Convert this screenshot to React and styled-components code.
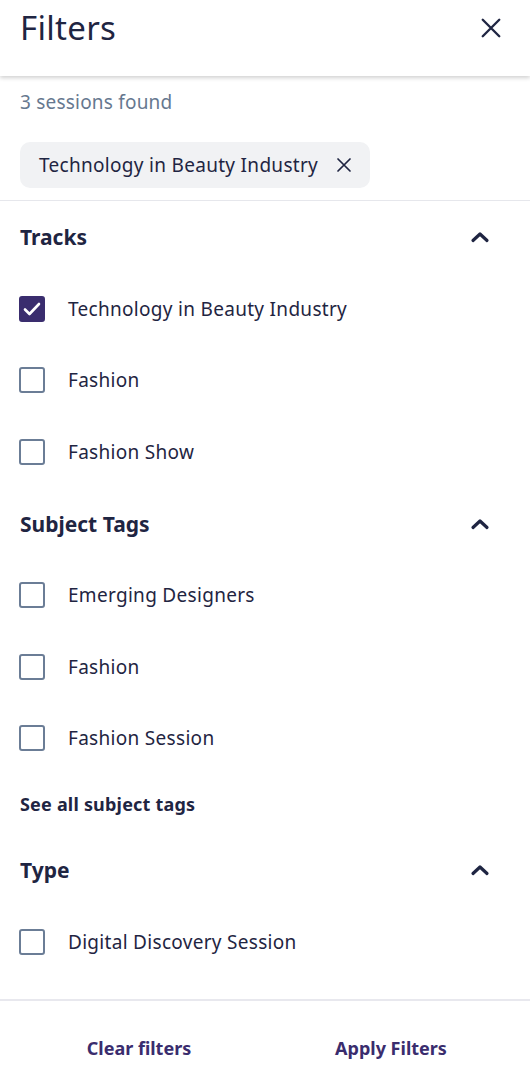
import React, { useState } from 'react';
import styled, { createGlobalStyle } from 'styled-components';

const GlobalStyle = createGlobalStyle`
  html, body {
    margin: 0;
    padding: 0;
    background: #fff;
  }
  body {
    font-family: "Noto Sans", Lato, sans-serif;
    color: #1f2542;
  }
  * { box-sizing: border-box; }
`;

const Panel = styled.div`
  width: 530px;
  height: 1086px;
  display: flex;
  flex-direction: column;
  background: #fff;
  overflow: hidden;
`;

const Header = styled.div`
  height: 76px;
  flex-shrink: 0;
  display: flex;
  align-items: flex-start;
  justify-content: space-between;
  padding: 0 20px;
  box-shadow: 0 2px 4px rgba(0, 0, 0, 0.18);
  position: relative;
  z-index: 1;
`;

const Title = styled.h1`
  margin: 0;
  font-size: 33px;
  font-weight: 400;
  letter-spacing: 0.3px;
  line-height: 56px;
  color: #1f2542;
`;

const IconButton = styled.button`
  width: 36px;
  height: 56px;
  padding: 0;
  border: none;
  background: none;
  display: flex;
  align-items: center;
  justify-content: center;
  color: #1f2542;
  cursor: pointer;
  margin-right: 1px;
`;

const Body = styled.div`
  flex: 1;
  display: flex;
  flex-direction: column;
`;

const Summary = styled.div`
  padding: 14px 20px 12px;
  border-bottom: 1px solid #e6e7ec;
`;

const Count = styled.p`
  margin: 0;
  font-size: 19px;
  letter-spacing: 0.2px;
  line-height: 24px;
  color: #66788f;
`;

const Chip = styled.div`
  display: inline-flex;
  align-items: center;
  gap: 18px;
  height: 46px;
  margin-top: 28px;
  padding: 0 18px 0 19px;
  background: #f1f2f4;
  border-radius: 10px;
  font-size: 19px;
  letter-spacing: 0.3px;
  color: #1f2542;
`;

const ChipClose = styled.button`
  border: none;
  background: none;
  padding: 0;
  display: flex;
  color: #1f2542;
  cursor: pointer;
`;

const Section = styled.section`
  padding: 0 20px;
`;

const SectionHead = styled.div`
  height: 72px;
  display: flex;
  align-items: center;
  justify-content: space-between;
`;

const SectionTitle = styled.h2`
  margin: 0;
  font-size: 21px;
  font-weight: 700;
  color: #1f2542;
`;

const Chevron = styled.span`
  display: flex;
  margin-right: 20px;
  color: #1f2542;
`;

const Option = styled.label`
  height: 71.5px;
  display: flex;
  align-items: center;
  gap: 23px;
  font-size: 19px;
  letter-spacing: 0.3px;
  color: #1f2542;
  cursor: pointer;
`;

const Box = styled.span`
  width: 26px;
  height: 26px;
  flex-shrink: 0;
  margin-left: -1px;
  border-radius: 3px;
  border: 2px solid ${(p) => (p.checked ? '#3a2d6e' : '#6b7d96')};
  background: ${(p) => (p.checked ? '#3a2d6e' : '#fff')};
  display: flex;
  align-items: center;
  justify-content: center;
`;

const SeeAll = styled.button`
  height: 60px;
  padding: 0;
  border: none;
  background: none;
  font-family: inherit;
  font-size: 18px;
  letter-spacing: 0.2px;
  font-weight: 700;
  color: #1f2542;
  text-align: left;
  cursor: pointer;
`;

const Footer = styled.div`
  margin-top: auto;
  height: 87px;
  border-top: 2px solid #e8e8ee;
  display: grid;
  grid-template-columns: 1fr 1fr;
  gap: 14px;
  padding: 0 20px;
  align-items: center;
`;

const FooterButton = styled.button`
  border: none;
  background: none;
  font-family: inherit;
  font-size: 18px;
  font-weight: 700;
  color: #3a2d6e;
  padding: 8px 0 0;
  cursor: pointer;
`;

const XIcon = ({ size, stroke }) => (
  <svg width={size} height={size} viewBox="0 0 24 24" fill="none" stroke="currentColor" strokeWidth={stroke} strokeLinecap="round">
    <path d="M3 3l18 18M21 3L3 21" />
  </svg>
);

const UpIcon = () => (
  <svg width="20" height="12" viewBox="0 0 20 12" fill="none" stroke="currentColor" strokeWidth="3.2" strokeLinecap="round" strokeLinejoin="round">
    <path d="M3 9.5L10 3l7 6.5" />
  </svg>
);

const Check = () => (
  <svg width="18" height="14" viewBox="0 0 18 14" fill="none" stroke="#fff" strokeWidth="2.6" strokeLinecap="round" strokeLinejoin="round">
    <path d="M2 7.5l4.5 4.5L16 2" />
  </svg>
);

const sections = [
  {
    title: 'Tracks',
    options: ['Technology in Beauty Industry', 'Fashion', 'Fashion Show'],
  },
  {
    title: 'Subject Tags',
    options: ['Emerging Designers', 'Fashion', 'Fashion Session'],
    more: 'See all subject tags',
  },
  {
    title: 'Type',
    options: ['Digital Discovery Session'],
  },
];

const App = () => {
  const [checked, setChecked] = useState({ 'Tracks-Technology in Beauty Industry': true });

  const toggle = (key) => setChecked((prev) => ({ ...prev, [key]: !prev[key] }));

  return (
    <Panel>
      <GlobalStyle />
      <Header>
        <Title>Filters</Title>
        <IconButton aria-label="Close">
          <XIcon size={22} stroke={2.6} />
        </IconButton>
      </Header>
      <Body>
        <Summary>
          <Count>3 sessions found</Count>
          <Chip>
            Technology in Beauty Industry
            <ChipClose aria-label="Remove">
              <XIcon size={16} stroke={2.6} />
            </ChipClose>
          </Chip>
        </Summary>
        {sections.map((s) => (
          <Section key={s.title}>
            <SectionHead>
              <SectionTitle>{s.title}</SectionTitle>
              <Chevron>
                <UpIcon />
              </Chevron>
            </SectionHead>
            {s.options.map((o) => {
              const key = `${s.title}-${o}`;
              return (
                <Option key={key} onClick={() => toggle(key)}>
                  <Box checked={!!checked[key]}>{checked[key] && <Check />}</Box>
                  {o}
                </Option>
              );
            })}
            {s.more && <SeeAll>{s.more}</SeeAll>}
          </Section>
        ))}
        <Footer>
          <FooterButton>Clear filters</FooterButton>
          <FooterButton>Apply Filters</FooterButton>
        </Footer>
      </Body>
    </Panel>
  );
};

export default App;
